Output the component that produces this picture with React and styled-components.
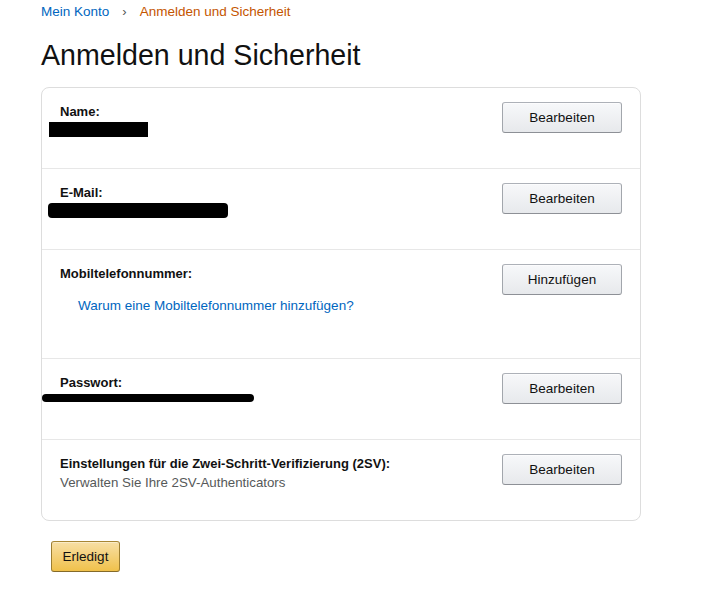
import React from "react";
import styled, { createGlobalStyle } from "styled-components";

const Global = createGlobalStyle`
  html, body { margin: 0; padding: 0; background: #fff; }
  body { font-family: "Liberation Sans", Arial, sans-serif; color: #111; }
  * { box-sizing: border-box; }
`;

const Page = styled.div`
  width: 600px;
  margin-left: 41px;
  padding-top: 2px;
`;

const Breadcrumb = styled.nav`
  display: flex;
  align-items: center;
  gap: 13px;
  height: 19px;
  font-size: 13.5px;
  line-height: 19px;
`;

const Crumb = styled.a`
  color: ${(p) => (p.$current ? "#c45500" : "#0066c0")};
  text-decoration: none;
`;

const Sep = styled.span`
  color: #555;
  font-size: 13px;
`;

const Title = styled.h1`
  margin: 16px 0 14px;
  font-size: 28.6px;
  line-height: 36px;
  font-weight: 400;
  color: #111;
`;

const Card = styled.div`
  border: 1px solid #ddd;
  border-radius: 8px;
  overflow: hidden;
`;

const Row = styled.div`
  display: flex;
  justify-content: space-between;
  align-items: flex-start;
  min-height: ${(p) => (p.$last ? 80 : 81)}px;
  padding: 14px 18px;
  border-bottom: ${(p) => (p.$last ? "none" : "1px solid #e7e7e7")};
`;

const Info = styled.div`
  display: flex;
  flex-direction: column;
`;

const Label = styled.div`
  font-size: 13px;
  line-height: 19px;
  font-weight: 700;
  color: #111;
`;

const SubText = styled.div`
  font-size: 13.3px;
  line-height: 19px;
  color: #565959;
`;

const Link = styled.a`
  display: block;
  margin: 13px 0 29px 18px;
  font-size: 13.5px;
  line-height: 19px;
  color: #0066c0;
  text-decoration: none;
`;

const Redacted = styled.div`
  background: #000;
  width: ${(p) => p.$w}px;
  height: ${(p) => p.$h}px;
  margin-left: ${(p) => p.$ml}px;
  margin-top: ${(p) => p.$mt}px;
  border-radius: ${(p) => p.$r}px;
`;

const Button = styled.button`
  flex: none;
  width: 120px;
  height: 31px;
  border: 1px solid #adb1b8;
  border-color: #adb1b8 #a2a6ac #8d9096;
  border-radius: 3px;
  background: linear-gradient(to bottom, #f7f8fa, #e7e9ec);
  box-shadow: 0 1px 0 rgba(255, 255, 255, 0.6) inset;
  font-family: inherit;
  font-size: 13.5px;
  color: #111;
  padding: 0;
  cursor: pointer;
`;

const DoneButton = styled.button`
  margin: 20px 0 0 10px;
  width: 69px;
  height: 31px;
  border: 1px solid #a88734;
  border-color: #a88734 #9c7e31 #846a29;
  border-radius: 3px;
  background: linear-gradient(to bottom, #f7dfa5, #f0c14b);
  box-shadow: 0 1px 0 rgba(255, 255, 255, 0.4) inset;
  font-family: inherit;
  font-size: 13.5px;
  color: #111;
  padding: 0;
  cursor: pointer;
`;

export default function App() {
  return (
    <>
      <Global />
      <Page>
        <Breadcrumb>
          <Crumb href="#">Mein Konto</Crumb>
          <Sep>›</Sep>
          <Crumb $current href="#">Anmelden und Sicherheit</Crumb>
        </Breadcrumb>
        <Title>Anmelden und Sicherheit</Title>
        <Card>
          <Row>
            <Info>
              <Label>Name:</Label>
              <Redacted $w={99} $h={15} $ml={-11} $mt={1} $r={0} />
            </Info>
            <Button>Bearbeiten</Button>
          </Row>
          <Row>
            <Info>
              <Label>E-Mail:</Label>
              <Redacted $w={180} $h={15} $ml={-12} $mt={1} $r={4} />
            </Info>
            <Button>Bearbeiten</Button>
          </Row>
          <Row>
            <Info>
              <Label>Mobiltelefonnummer:</Label>
              <Link href="#">Warum eine Mobiltelefonnummer hinzufügen?</Link>
            </Info>
            <Button>Hinzufügen</Button>
          </Row>
          <Row>
            <Info>
              <Label>Passwort:</Label>
              <Redacted $w={212} $h={8} $ml={-18} $mt={2} $r={4} />
            </Info>
            <Button>Bearbeiten</Button>
          </Row>
          <Row $last>
            <Info>
              <Label>Einstellungen für die Zwei-Schritt-Verifizierung (2SV):</Label>
              <SubText>Verwalten Sie Ihre 2SV-Authenticators</SubText>
            </Info>
            <Button>Bearbeiten</Button>
          </Row>
        </Card>
        <DoneButton>Erledigt</DoneButton>
      </Page>
    </>
  );
}
